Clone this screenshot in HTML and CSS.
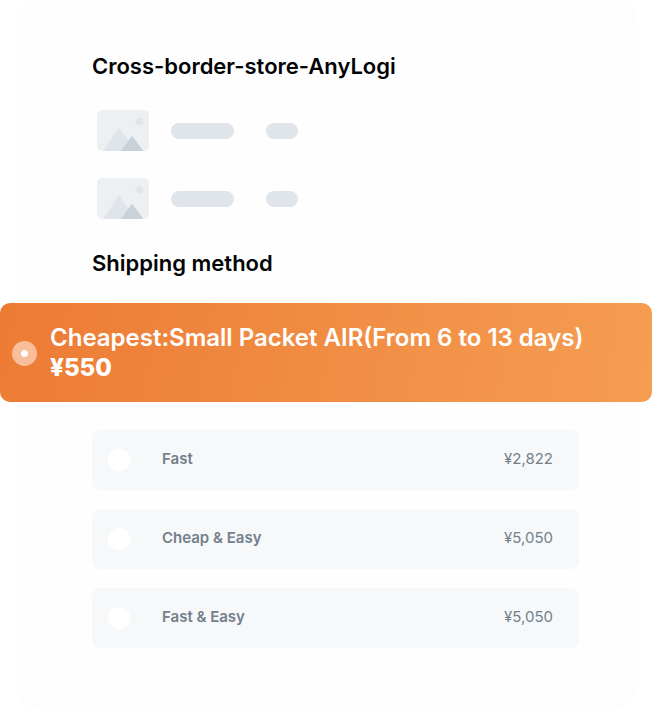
FILE: index.html
```html
<!DOCTYPE html>
<html lang="en">
<head>
<meta charset="utf-8">
<meta name="viewport" content="width=device-width, initial-scale=1">
<title>Cross-border-store-AnyLogi</title>
<link rel="stylesheet" href="styles.css">
</head>
<body>
<svg class="defs" aria-hidden="true">
  <symbol id="picture" viewBox="0 0 52 41">
    <rect width="52" height="41" rx="5" fill="#ecf0f3"/>
    <circle cx="42.5" cy="11.5" r="3.8" fill="#e0e5eb"/>
    <path d="M6 41 L20.500 19.500 Q22 17 23.500 19.500 L38 41Z" fill="#e0e5eb"/>
    <path d="M24 41 L34 27 Q35 25.500 36 27 L46.500 41Z" fill="#c9d1d9"/>
  </symbol>
</svg>
<main class="card">
  <h1 class="heading">Cross-border-store-AnyLogi</h1>
  <div class="items">
    <div class="item">
      <svg class="thumb" aria-hidden="true"><use href="#picture"/></svg>
      <span class="pill pill-name"></span>
      <span class="pill pill-price"></span>
    </div>
    <div class="item">
      <svg class="thumb" aria-hidden="true"><use href="#picture"/></svg>
      <span class="pill pill-name"></span>
      <span class="pill pill-price"></span>
    </div>
  </div>
  <h2 class="heading">Shipping method</h2>
  <form class="methods">
    <label class="featured">
      <input class="radio radio-featured" type="radio" name="method" checked>
      <span class="featured-text">
        <span class="featured-name">Cheapest:Small Packet AIR(From 6 to 13 days)</span>
        <span class="featured-price">¥550</span>
      </span>
    </label>
    <div class="options">
      <label class="option">
        <input class="radio" type="radio" name="method">
        <span class="option-name">Fast</span>
        <span class="option-price">¥2,822</span>
      </label>
      <label class="option">
        <input class="radio" type="radio" name="method">
        <span class="option-name">Cheap &amp; Easy</span>
        <span class="option-price">¥5,050</span>
      </label>
      <label class="option">
        <input class="radio" type="radio" name="method">
        <span class="option-name">Fast &amp; Easy</span>
        <span class="option-price">¥5,050</span>
      </label>
    </div>
  </form>
</main>
</body>
</html>
```
FILE: styles.css
```css
* {
  box-sizing: border-box;
}

body {
  margin: 0;
  background: #fff;
  color: #020304;
  font-family: Inter, "Liberation Sans", sans-serif;
}

.defs {
  display: none;
}

/* Faint arcs mark the card's rounded corners. */
.card {
  --arc: transparent 23px, #f7f7f7 24px, transparent 25px;
  margin: 0 16px;
  padding: 52px 0 60px;
  border-radius: 24px;
  background:
    radial-gradient(circle at 100% 100%, var(--arc)) left top / 24px 24px no-repeat,
    radial-gradient(circle at 0 100%, var(--arc)) right top / 24px 24px no-repeat,
    radial-gradient(circle at 100% 0, var(--arc)) left bottom / 24px 24px no-repeat,
    radial-gradient(circle at 0 0, var(--arc)) right bottom / 24px 24px no-repeat,
    #fefefe;
}

.heading {
  margin: 0 76px;
  font-size: 22px;
  font-weight: 600;
  line-height: 28px;
}

.items {
  display: flex;
  flex-direction: column;
  gap: 27px;
  margin: 30px 81px;
}

.item {
  display: flex;
  align-items: center;
}

.thumb {
  width: 52px;
  height: 41px;
}

.pill {
  height: 16px;
  border-radius: 8px;
  background: #e0e5eb;
}

.pill-name {
  width: 63px;
  margin: 0 32px 0 22px;
}

.pill-price {
  width: 32px;
}

.featured {
  display: flex;
  align-items: center;
  gap: 13px;
  margin: 26px -16px 28px;
  padding: 20px 12px 19px;
  border-radius: 10px;
  background: linear-gradient(100deg, #ed7b34, #f59d52);
  color: #fff;
  font-size: 24px;
  line-height: 30px;
}

.featured-text {
  display: flex;
  flex-direction: column;
}

.featured-name {
  font-weight: 600;
}

.featured-price {
  font-weight: 800;
}

.radio {
  appearance: none;
  flex: none;
  width: 22px;
  height: 22px;
  margin: 0;
  border-radius: 50%;
  background: #fff;
}

.radio-featured {
  width: 25px;
  height: 25px;
  background: radial-gradient(circle, #fff 3px, #f8be99 4px);
}

.options {
  display: flex;
  flex-direction: column;
  gap: 19px;
  margin: 0 57px 0 76px;
}

.option {
  display: flex;
  align-items: center;
  height: 60px;
  padding: 0 26px 0 16px;
  border-radius: 8px;
  background: #f6f8fa;
  color: #73808c;
  font-size: 15px;
  line-height: 20px;
}

.option-name,
.option-price {
  padding-bottom: 3px;
}

.option-name {
  margin-left: 32px;
  font-weight: 600;
}

.option-price {
  margin-left: auto;
}
```
